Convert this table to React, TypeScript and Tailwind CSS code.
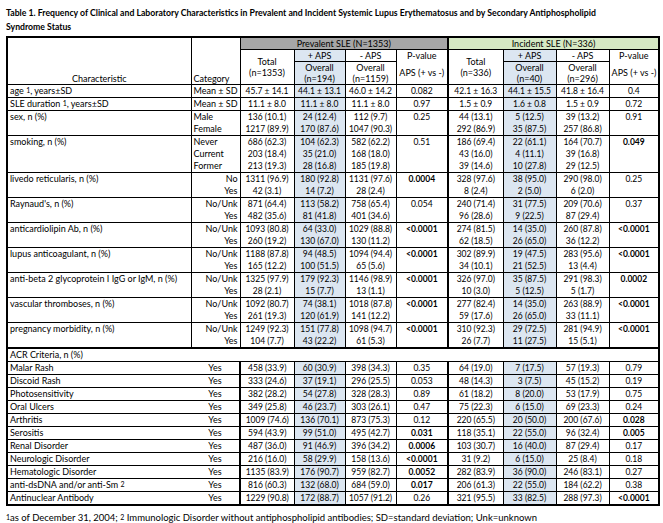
import React from 'react';

type Group = {
  label: React.ReactNode;
  align: 'left' | 'right' | 'center';
  rows: string[][];
  p: [string, string];
  bold?: [boolean, boolean];
};

const sup = (n: string) => <sup className="text-[7px] relative -top-[1px]">{n}</sup>;

const top: Group[] = [
  { label: <>age {sup('1')}, years±SD</>, align: 'left', rows: [['Mean ± SD', '45.7 ± 14.1', '44.1 ± 13.1', '46.0 ± 14.2', '42.1 ± 16.3', '44.1 ± 15.5', '41.8 ± 16.4']], p: ['0.082', '0.4'] },
  { label: <>SLE duration {sup('1')}, years±SD</>, align: 'left', rows: [['Mean ± SD', '11.1 ± 8.0', '11.1 ± 8.0', '11.1 ± 8.0', '1.5 ± 0.9', '1.6 ± 0.8', '1.5 ± 0.9']], p: ['0.97', '0.72'] },
  {
    label: 'sex, n (%)', align: 'left',
    rows: [
      ['Male', '136 (10.1)', '24 (12.4)', '112 (9.7)', '44 (13.1)', '5 (12.5)', '39 (13.2)'],
      ['Female', '1217 (89.9)', '170 (87.6)', '1047 (90.3)', '292 (86.9)', '35 (87.5)', '257 (86.8)'],
    ],
    p: ['0.25', '0.91'],
  },
  {
    label: 'smoking, n (%)', align: 'left',
    rows: [
      ['Never', '686 (62.3)', '104 (62.3)', '582 (62.2)', '186 (69.4)', '22 (61.1)', '164 (70.7)'],
      ['Current', '203 (18.4)', '35 (21.0)', '168 (18.0)', '43 (16.0)', '4 (11.1)', '39 (16.8)'],
      ['Former', '213 (19.3)', '28 (16.8)', '185 (19.8)', '39 (14.6)', '10 (27.8)', '29 (12.5)'],
    ],
    p: ['0.51', '0.049'], bold: [false, true],
  },
  {
    label: 'livedo reticularis, n (%)', align: 'right',
    rows: [
      ['No', '1311 (96.9)', '180 (92.8)', '1131 (97.6)', '328 (97.6)', '38 (95.0)', '290 (98.0)'],
      ['Yes', '42 (3.1)', '14 (7.2)', '28 (2.4)', '8 (2.4)', '2 (5.0)', '6 (2.0)'],
    ],
    p: ['0.0004', '0.25'], bold: [true, false],
  },
  {
    label: "Raynaud's, n (%)", align: 'right',
    rows: [
      ['No/Unk', '871 (64.4)', '113 (58.2)', '758 (65.4)', '240 (71.4)', '31 (77.5)', '209 (70.6)'],
      ['Yes', '482 (35.6)', '81 (41.8)', '401 (34.6)', '96 (28.6)', '9 (22.5)', '87 (29.4)'],
    ],
    p: ['0.054', '0.37'],
  },
  {
    label: 'anticardiolipin Ab, n (%)', align: 'right',
    rows: [
      ['No/Unk', '1093 (80.8)', '64 (33.0)', '1029 (88.8)', '274 (81.5)', '14 (35.0)', '260 (87.8)'],
      ['Yes', '260 (19.2)', '130 (67.0)', '130 (11.2)', '62 (18.5)', '26 (65.0)', '36 (12.2)'],
    ],
    p: ['<0.0001', '<0.0001'], bold: [true, true],
  },
  {
    label: 'lupus anticoagulant, n (%)', align: 'right',
    rows: [
      ['No/Unk', '1188 (87.8)', '94 (48.5)', '1094 (94.4)', '302 (89.9)', '19 (47.5)', '283 (95.6)'],
      ['Yes', '165 (12.2)', '100 (51.5)', '65 (5.6)', '34 (10.1)', '21 (52.5)', '13 (4.4)'],
    ],
    p: ['<0.0001', '<0.0001'], bold: [true, true],
  },
  {
    label: 'anti-beta 2 glycoprotein I IgG or IgM, n (%)', align: 'right',
    rows: [
      ['No/Unk', '1325 (97.9)', '179 (92.3)', '1146 (98.9)', '326 (97.0)', '35 (87.5)', '291 (98.3)'],
      ['Yes', '28 (2.1)', '15 (7.7)', '13 (1.1)', '10 (3.0)', '5 (12.5)', '5 (1.7)'],
    ],
    p: ['<0.0001', '0.0002'], bold: [true, true],
  },
  {
    label: 'vascular thromboses, n (%)', align: 'right',
    rows: [
      ['No/Unk', '1092 (80.7)', '74 (38.1)', '1018 (87.8)', '277 (82.4)', '14 (35.0)', '263 (88.9)'],
      ['Yes', '261 (19.3)', '120 (61.9)', '141 (12.2)', '59 (17.6)', '26 (65.0)', '33 (11.1)'],
    ],
    p: ['<0.0001', '<0.0001'], bold: [true, true],
  },
  {
    label: 'pregnancy morbidity, n (%)', align: 'right',
    rows: [
      ['No/Unk', '1249 (92.3)', '151 (77.8)', '1098 (94.7)', '310 (92.3)', '29 (72.5)', '281 (94.9)'],
      ['Yes', '104 (7.7)', '43 (22.2)', '61 (5.3)', '26 (7.7)', '11 (27.5)', '15 (5.1)'],
    ],
    p: ['<0.0001', '<0.0001'], bold: [true, true],
  },
];

// '*' marks a bold p-value
const acr: Group[] = [
  ['Malar Rash', '458 (33.9)', '60 (30.9)', '398 (34.3)', '0.35', '64 (19.0)', '7 (17.5)', '57 (19.3)', '0.79'],
  ['Discoid Rash', '333 (24.6)', '37 (19.1)', '296 (25.5)', '0.053', '48 (14.3)', '3 (7.5)', '45 (15.2)', '0.19'],
  ['Photosensitivity', '382 (28.2)', '54 (27.8)', '328 (28.3)', '0.89', '61 (18.2)', '8 (20.0)', '53 (17.9)', '0.75'],
  ['Oral Ulcers', '349 (25.8)', '46 (23.7)', '303 (26.1)', '0.47', '75 (22.3)', '6 (15.0)', '69 (23.3)', '0.24'],
  ['Arthritis', '1009 (74.6)', '136 (70.1)', '873 (75.3)', '0.12', '220 (65.5)', '20 (50.0)', '200 (67.6)', '*0.028'],
  ['Serositis', '594 (43.9)', '99 (51.0)', '495 (42.7)', '*0.031', '118 (35.1)', '22 (55.0)', '96 (32.4)', '*0.005'],
  ['Renal Disorder', '487 (36.0)', '91 (46.9)', '396 (34.2)', '*0.0006', '103 (30.7)', '16 (40.0)', '87 (29.4)', '0.17'],
  ['Neurologic Disorder', '216 (16.0)', '58 (29.9)', '158 (13.6)', '*<0.0001', '31 (9.2)', '6 (15.0)', '25 (8.4)', '0.18'],
  ['Hematologic Disorder', '1135 (83.9)', '176 (90.7)', '959 (82.7)', '*0.0052', '282 (83.9)', '36 (90.0)', '246 (83.1)', '0.27'],
  ['anti-dsDNA and/or anti-Sm ²', '816 (60.3)', '132 (68.0)', '684 (59.0)', '*0.017', '206 (61.3)', '22 (55.0)', '184 (62.2)', '0.38'],
  ['Antinuclear Antibody', '1229 (90.8)', '172 (88.7)', '1057 (91.2)', '0.26', '321 (95.5)', '33 (82.5)', '288 (97.3)', '*<0.0001'],
].map((r) => {
  const strip = (s: string) => s.replace('*', '');
  const lbl = r[0].endsWith('²') ? <>{r[0].slice(0, -2)} {sup('2')}</> : r[0];
  return {
    label: lbl,
    align: 'center' as const,
    rows: [['Yes', r[1], r[2], r[3], r[5], r[6], r[7]]],
    p: [strip(r[4]), strip(r[8])] as [string, string],
    bold: [r[4].startsWith('*'), r[8].startsWith('*')] as [boolean, boolean],
  };
});

const widths = [184, 49, 54, 51, 51, 52, 55, 53, 53, 50];
const blue = 'bg-[#dce6f1]';
const cell = 'border-x border-black px-[2px] whitespace-nowrap';
const body = `${cell} leading-[12px]`;
const head = `${cell} leading-[11px] text-[9px]`;
const lbl = 'text-[9px]';

function GroupRows({ g, acrRow }: { g: Group; acrRow?: boolean }) {
  const n = g.rows.length;
  const t = 'border-t border-black';
  const alignCls = g.align === 'left' ? 'text-left' : g.align === 'right' ? 'text-right' : 'text-center';
  return (
    <>
      {g.rows.map((r, i) => {
        const bt = i === 0 ? t : '';
        return (
          <tr key={i}>
            {i === 0 && (
              <td rowSpan={n} className={`${body} ${lbl} ${t} ${acrRow ? 'border-r-0' : ''} text-left align-top`}>{g.label}</td>
            )}
            <td className={`${body} ${lbl} ${bt} ${alignCls} ${acrRow ? 'border-l-0 border-r-2' : ''}`}>{r[0]}</td>
            <td className={`${body} ${bt} text-center`}>{r[1]}</td>
            <td className={`${body} ${bt} ${blue} text-center`}>{r[2]}</td>
            <td className={`${body} ${bt} text-center`}>{r[3]}</td>
            {i === 0 && (
              <td rowSpan={n} className={`${body} ${t} border-r-2 text-center align-top ${g.bold?.[0] ? 'font-bold' : ''}`}>{g.p[0]}</td>
            )}
            <td className={`${body} ${bt} text-center`}>{r[4]}</td>
            <td className={`${body} ${bt} ${blue} text-center`}>{r[5]}</td>
            <td className={`${body} ${bt} text-center`}>{r[6]}</td>
            {i === 0 && (
              <td rowSpan={n} className={`${body} ${t} text-center align-top ${g.bold?.[1] ? 'font-bold' : ''}`}>{g.p[1]}</td>
            )}
          </tr>
        );
      })}
    </>
  );
}

export default function App() {
  return (
    <div className="w-[663px] h-[523px] bg-white text-black font-['Lato','Liberation_Sans',sans-serif] text-[8.5px] pl-[6px] pt-[6px]">
      <div className="font-bold text-[8.7px] leading-[14px]">
        Table 1. Frequency of Clinical and Laboratory Characteristics in Prevalent and Incident Systemic Lupus Erythematosus and by Secondary Antiphospholipid
        <br />
        Syndrome Status
      </div>
      <table className="mt-[2px] table-fixed border-collapse border-2 border-black" style={{ width: 652 }}>
        <colgroup>
          {widths.map((w, i) => (
            <col key={i} style={{ width: w }} />
          ))}
        </colgroup>
        <thead>
          <tr>
            <td rowSpan={3} className={`${head} text-center align-bottom`}>Characteristic</td>
            <td rowSpan={3} className={`${head} text-left align-bottom`}>Category</td>
            <td colSpan={4} className={`${head} border-y border-r-2 bg-[#a6a6a6] text-center`}>Prevalent SLE (N=1353)</td>
            <td colSpan={4} className={`${head} border-y bg-[#d6e9c4] text-center`}>Incident SLE (N=336)</td>
          </tr>
          <tr>
            <td rowSpan={2} className={`${head} text-center align-middle`}>Total<br />(n=1353)</td>
            <td className={`${head} border-b ${blue} text-center`}>+ APS</td>
            <td className={`${head} border-b text-center`}>- APS</td>
            <td className={`${head} border-r-2 text-center`}>P-value</td>
            <td rowSpan={2} className={`${head} text-center align-middle`}>Total<br />(n=336)</td>
            <td className={`${head} border-b ${blue} text-center`}>+ APS</td>
            <td className={`${head} border-b text-center`}>- APS</td>
            <td className={`${head} text-center`}>P-value</td>
          </tr>
          <tr>
            <td className={`${head} ${blue} text-center`}>Overall<br />(n=194)</td>
            <td className={`${head} text-center`}>Overall<br />(n=1159)</td>
            <td className={`${head} border-r-2 text-center`}>APS (+ vs -)</td>
            <td className={`${head} ${blue} text-center`}>Overall<br />(n=40)</td>
            <td className={`${head} text-center`}>Overall<br />(n=296)</td>
            <td className={`${head} text-center`}>APS (+ vs -)</td>
          </tr>
        </thead>
        <tbody>
          {top.map((g, i) => (
            <GroupRows key={i} g={g} />
          ))}
          <tr>
            <td colSpan={10} className={`${body} ${lbl} border-t-2 border-b text-left`}>ACR Criteria, n (%)</td>
          </tr>
          {acr.map((g, i) => (
            <GroupRows key={i} g={g} acrRow />
          ))}
        </tbody>
      </table>
      <div className="text-[9.5px] leading-[12px] mt-[6px]">
        {sup('1')}as of December 31, 2004; {sup('2')} Immunologic Disorder without antiphospholipid antibodies; SD=standard deviation; Unk=unknown
      </div>
    </div>
  );
}
